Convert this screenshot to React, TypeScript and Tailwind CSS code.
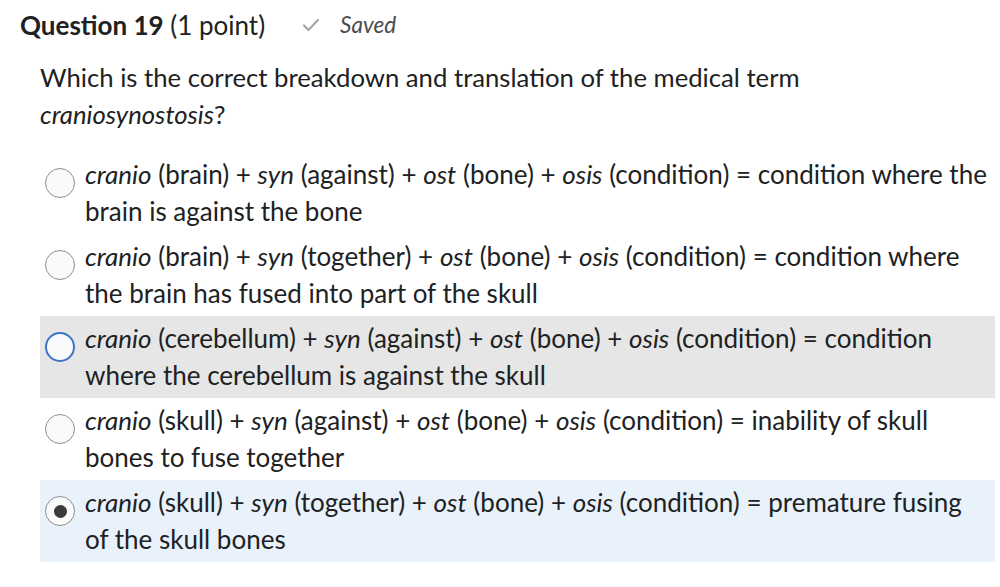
import React from "react";

type Opt = { parts: [string, string][]; tail: string; state?: "hover" | "checked" };

const options: Opt[] = [
  {
    parts: [["cranio", "brain"], ["syn", "against"], ["ost", "bone"], ["osis", "condition"]],
    tail: "condition where the brain is against the bone",
  },
  {
    parts: [["cranio", "brain"], ["syn", "together"], ["ost", "bone"], ["osis", "condition"]],
    tail: "condition where the brain has fused into part of the skull",
  },
  {
    parts: [["cranio", "cerebellum"], ["syn", "against"], ["ost", "bone"], ["osis", "condition"]],
    tail: "condition where the cerebellum is against the skull",
    state: "hover",
  },
  {
    parts: [["cranio", "skull"], ["syn", "against"], ["ost", "bone"], ["osis", "condition"]],
    tail: "inability of skull bones to fuse together",
  },
  {
    parts: [["cranio", "skull"], ["syn", "together"], ["ost", "bone"], ["osis", "condition"]],
    tail: "premature fusing of the skull bones",
    state: "checked",
  },
];

const Radio = ({ state }: { state?: "hover" | "checked" }) => {
  if (state === "hover") {
    return <span className="block w-[30px] h-[30px] rounded-full border-2 border-[#3b75c5] bg-[#f9fafc]" />;
  }
  if (state === "checked") {
    return (
      <span className="flex items-center justify-center w-[30px] h-[30px] rounded-full border border-[#8c8c8c] bg-[#fafafa]">
        <span className="block w-[13px] h-[13px] rounded-full bg-[#3a3a3a]" />
      </span>
    );
  }
  return <span className="block w-[30px] h-[30px] rounded-full border border-[#8e8e8e] bg-[#f9fafb]" />;
};

const Option = ({ opt }: { opt: Opt }) => {
  const bg = opt.state === "hover" ? "bg-[#e6e6e6]" : opt.state === "checked" ? "bg-[#e9f1fb]" : "";
  return (
    <div className={`flex py-1 ${bg}`}>
      <div className="w-[45px] shrink-0 pl-[5px] pt-[12px]">
        <Radio state={opt.state} />
      </div>
      <p className="pr-[5px] text-[26px]">
        {opt.parts.map(([term, meaning], i) => (
          <React.Fragment key={i}>
            <i>{term}</i> ({meaning}){i < opt.parts.length - 1 ? " + " : " = "}
          </React.Fragment>
        ))}
        {opt.tail}
      </p>
    </div>
  );
};

export default function App() {
  return (
    <div className="min-h-[587px] bg-white text-[#202122] font-['Lato',sans-serif] pt-[10px]">
      <div className="flex items-center pl-5 h-[30px]">
        <h2 className="text-[26px] leading-[30px]">
          <span className="font-bold">Question 19</span> (1 point)
        </h2>
        <span className="ml-[37px] flex items-center gap-[20px] text-[#494c4e]">
          <svg width="18" height="14" viewBox="0 0 18 14" fill="none">
            <path d="M2 7.5 L6.5 12 L16 2" stroke="#a3a6a8" strokeWidth="2.2" strokeLinecap="round" strokeLinejoin="round" />
          </svg>
          <i className="text-[22.5px]">Saved</i>
        </span>
      </div>
      <div className="pl-10 pr-[5px] text-[25.7px] leading-[37px]">
        <p className="mt-[19px]">
          Which is the correct breakdown and translation of the medical term
          <br />
          <i>craniosynostosis</i>?
        </p>
        <div className="mt-[19px]">
          {options.map((o, i) => (
            <Option key={i} opt={o} />
          ))}
        </div>
      </div>
    </div>
  );
}
